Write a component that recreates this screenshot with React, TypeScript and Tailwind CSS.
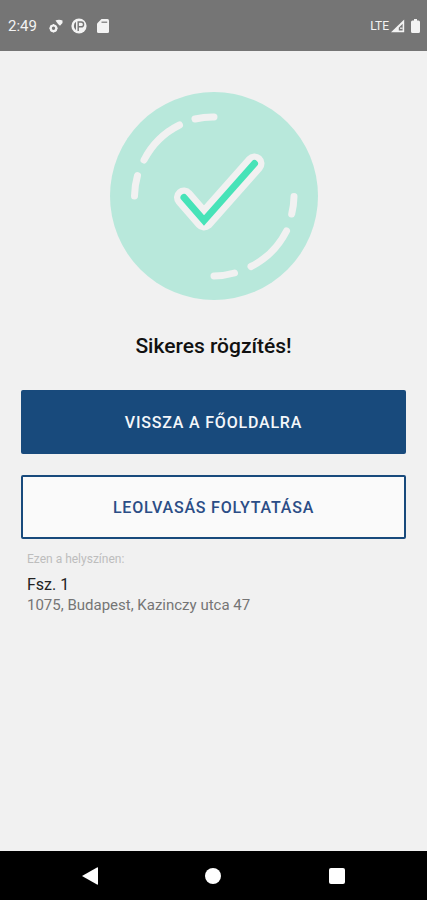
import React from "react";

const place = {
  name: "Fsz. 1",
  address: "1075, Budapest, Kazinczy utca 47",
};

export default function App() {
  return (
    <div className="flex min-h-screen flex-col bg-[#f1f1f1] font-[Roboto,sans-serif]">
      <StatusBar />
      <main className="flex flex-1 flex-col px-[21px] pt-[41px]">
        <SuccessBadge />
        <h1 className="mt-8 text-center text-[21px] leading-7 font-medium text-[#111]">Sikeres rögzítés!</h1>
        <button
          type="button"
          className="mt-[30px] h-16 rounded-xs bg-[#184a7c] pt-0.5 text-base font-medium tracking-wider text-[#f4f7fa]"
        >
          VISSZA A FŐOLDALRA
        </button>
        <button
          type="button"
          className="mt-[21px] h-16 rounded-xs border-2 border-[#184a7c] bg-[#fafafa] pt-0.5 text-base font-medium tracking-wider text-[#2b4d86]"
        >
          LEOLVASÁS FOLYTATÁSA
        </button>
        <section className="mt-3 px-1.5">
          <p className="text-xs leading-4 text-[#bdbdbd]">Ezen a helyszínen:</p>
          <h2 className="mt-2 text-base leading-5 text-[#222]">{place.name}</h2>
          <p className="text-[15px] leading-5 text-[#757575]">{place.address}</p>
        </section>
      </main>
      <NavigationBar />
    </div>
  );
}

const StatusBar = () => {
  return (
    <header className="flex h-[51px] items-center justify-between bg-[#757575] pr-[7px] pl-2 text-[#f3f3f3]">
      <div className="flex items-center">
        <span className="text-[15px] leading-5">2:49</span>
        <svg viewBox="0 0 14 14" className="ml-3 size-3.5" fill="none" aria-hidden="true">
          <circle cx="4.5" cy="9.3" r="2.8" stroke="currentColor" strokeWidth="2.2" />
          <path d="M4.5 5v1M4.5 12.6v1M.5 9.3h1M7.5 9.3h1M1.7 6.5l.7.7M6.6 11.4l.7.7M1.7 12.1l.7-.7" stroke="currentColor" strokeWidth="1.4" />
          <path d="M6.5 1.6C8.7.3 11.3.3 13.5 1.6V4L11 6.8L9 5z" fill="currentColor" />
        </svg>
        <svg viewBox="0 0 16 16" className="ml-2 size-4" fill="none" aria-hidden="true">
          <circle cx="8" cy="8" r="7.6" fill="currentColor" />
          <path d="M5 3.8A5.2 5.2 0 0 0 5 12.2z" fill="#757575" />
          <path d="M7.2 13V4H10.2a2.4 2.4 0 0 1 0 4.8H7.4" stroke="#757575" strokeWidth="1.4" />
        </svg>
        <svg viewBox="0 0 12 14" className="ml-2.5 h-3.5 w-3" aria-hidden="true">
          <path d="M4.5 0H10.5Q12 0 12 1.5V12.5Q12 14 10.5 14H1.5Q0 14 0 12.5V4.5z" fill="currentColor" />
          <path d="M4.5 3.2H10.2" stroke="#757575" strokeWidth="1.2" />
        </svg>
      </div>
      <div className="flex items-center">
        <span className="text-xs leading-5">LTE</span>
        <svg viewBox="0 0 14 14" className="ml-0.5 size-3.5" aria-hidden="true">
          <path d="M0 13.2H13.2V.5z" fill="currentColor" />
          <path d="M7.8 8.8L11.6 4.8V11.6H7.8z" fill="#757575" />
          <path d="M9 9.8H11.6V8.6H9z" fill="currentColor" />
        </svg>
        <svg viewBox="0 0 9 14" className="ml-1.5 h-3.5 w-[9px]" aria-hidden="true">
          <path d="M3 0H6V1.5H7.5Q9 1.5 9 3V12.5Q9 14 7.5 14H1.5Q0 14 0 12.5V3Q0 1.5 1.5 1.5H3z" fill="currentColor" />
        </svg>
      </div>
    </header>
  );
};

const SuccessBadge = () => {
  return (
    <svg viewBox="0 0 208 208" className="size-52 self-center" fill="none" strokeLinecap="round" aria-hidden="true">
      <circle cx="104" cy="104" r="104" fill="#b8e8db" />
      <g stroke="#f1f1f1" strokeWidth="7">
        <path d="M85 27A80 80 0 0 1 104 25" />
        <path d="M34 68A80 80 0 0 1 69.5 33" />
        <path d="M24.5 104A80 80 0 0 1 27.5 83.5" />
        <path d="M184 104.5A80 80 0 0 1 181.7 122" />
        <path d="M176.5 139A80 80 0 0 1 141 174.5" />
        <path d="M124.5 181A80 80 0 0 1 104 184" />
      </g>
      <g strokeLinejoin="round">
        <path d="M74 105.5L94 128.5L144.5 71.5" stroke="#f1f1f1" strokeWidth="20" />
        <path d="M74 105.5L94 128.5L144.5 71.5" stroke="#47e3b8" strokeWidth="7" strokeLinejoin="miter" />
      </g>
    </svg>
  );
};

const NavigationBar = () => {
  return (
    <nav className="flex h-[49px] justify-center bg-black text-white">
      <button type="button" aria-label="Vissza" className="flex w-[29%] items-center justify-center">
        <svg viewBox="0 0 16 18" className="h-[18px] w-4" fill="currentColor" aria-hidden="true">
          <path d="M0 9L15 .5Q16 0 16 1V17Q16 18 15 17.5z" />
        </svg>
      </button>
      <button type="button" aria-label="Kezdőképernyő" className="flex w-[29%] items-center justify-center">
        <span className="size-4 rounded-full bg-white" />
      </button>
      <button type="button" aria-label="Áttekintés" className="flex w-[29%] items-center justify-center">
        <span className="size-4 rounded-xs bg-white" />
      </button>
    </nav>
  );
};
